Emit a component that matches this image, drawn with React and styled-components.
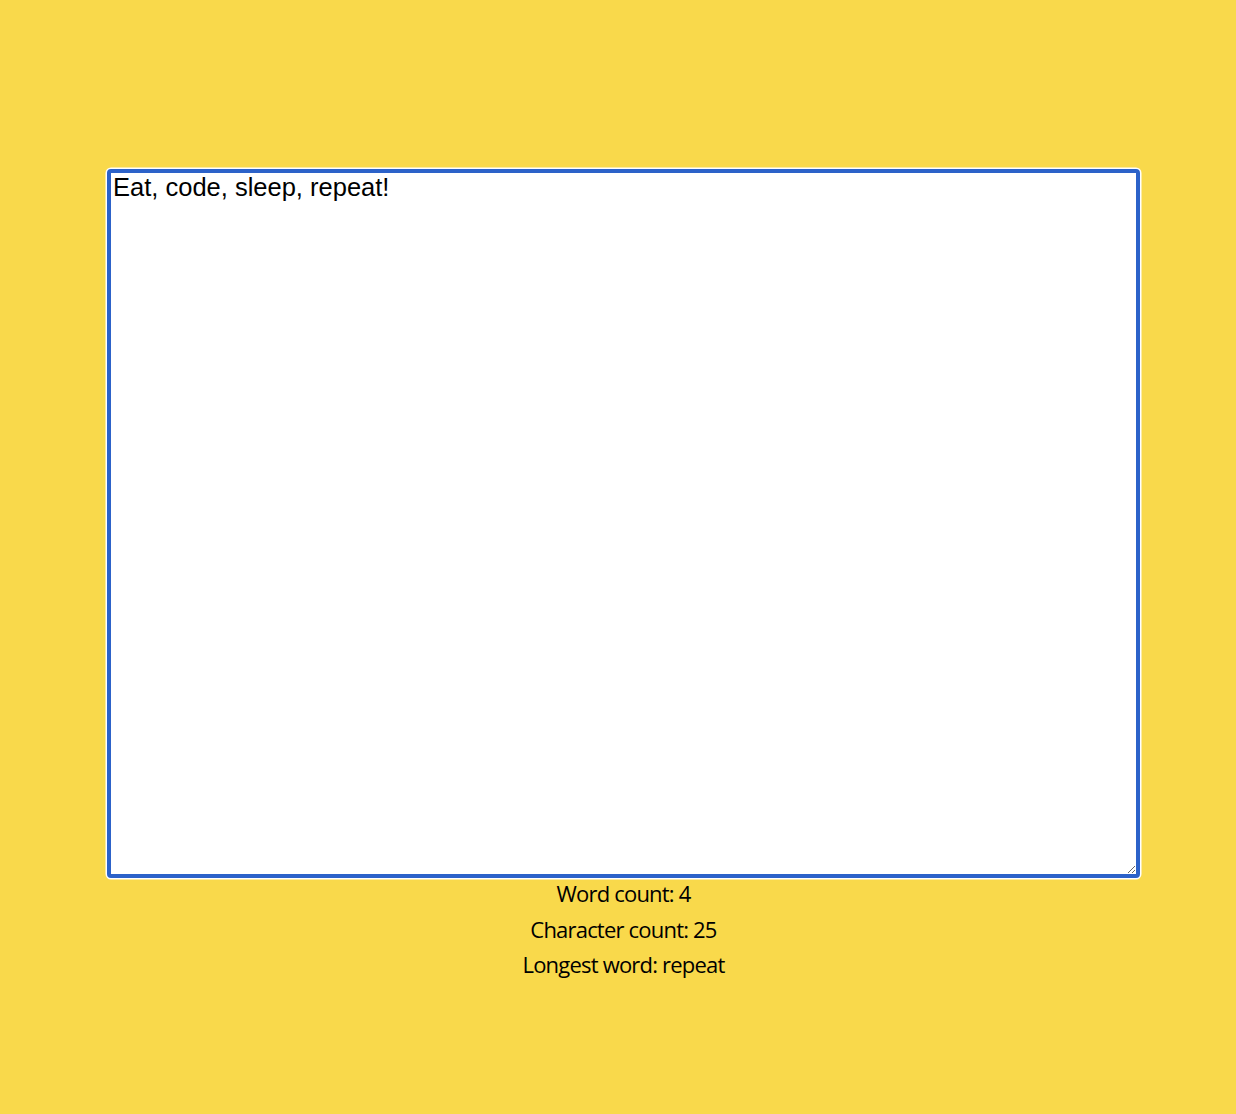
import React, { useState } from "react";
import styled, { createGlobalStyle } from "styled-components";

const Global = createGlobalStyle`
  html, body { margin: 0; padding: 0; }
  body {
    background: #f9d94b;
    font-family: "Open Sans", "Liberation Sans", sans-serif;
    min-height: 1114px;
  }
`;

const Page = styled.main`
  display: flex;
  justify-content: flex-start;
  padding: 169px 0 0 107px;
`;

const Column = styled.div`
  width: 1033px;
  display: flex;
  flex-direction: column;
  align-items: stretch;
`;

const Editor = styled.textarea`
  box-sizing: border-box;
  width: 1033px;
  height: 709px;
  margin: 0;
  padding: 0 2px;
  background: #fff;
  color: #000;
  font-family: "Liberation Sans", Arial, sans-serif;
  font-size: 25.5px;
  line-height: 1.15;
  border: 4px solid #2c62c9;
  border-radius: 4px;
  box-shadow: 0 0 0 1.5px #fff;
  outline: none;
  resize: both;
`;

const Stats = styled.div`
  display: flex;
  flex-direction: column;
  align-items: center;
  margin-top: -2px;
`;

const Stat = styled.p`
  margin: 0;
  font-family: "Open Sans", "Liberation Sans", sans-serif;
  font-size: 22px;
  letter-spacing: -0.8px;
  line-height: 35.5px;
  color: #000;
`;

export default function App() {
  const [text, setText] = useState("Eat, code, sleep, repeat!");
  const words = text.trim().split(/\s+/).filter(Boolean);
  const cleaned = words.map((w) => w.replace(/[^\w]/g, ""));
  const longest = cleaned.reduce((a, b) => (b.length > a.length ? b : a), "");
  return (
    <>
      <Global />
      <Page>
        <Column>
          <Editor value={text} onChange={(e) => setText(e.target.value)} autoFocus />
          <Stats>
            <Stat>Word count: {words.length}</Stat>
            <Stat>Character count: {text.length}</Stat>
            <Stat>Longest word: {longest}</Stat>
          </Stats>
        </Column>
      </Page>
    </>
  );
}
